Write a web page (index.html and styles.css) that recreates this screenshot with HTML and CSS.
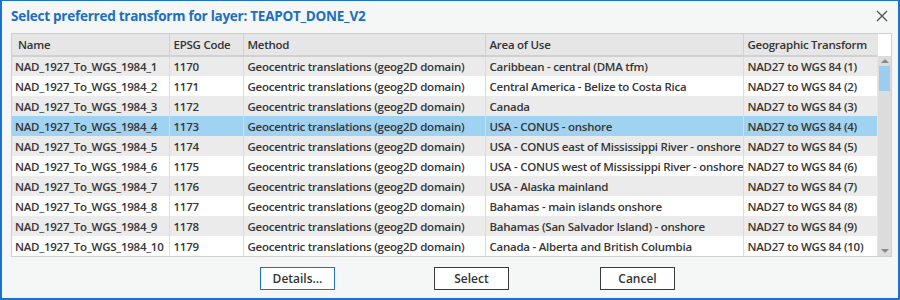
FILE: index.html
```html
<!DOCTYPE html>
<html lang="en">
<head>
    <meta charset="UTF-8">
    <title>Select preferred transform</title>
    <link rel="stylesheet" href="styles.css">
</head>
<body>
    <div class="dialog">
        <div class="titlebar">
            <h1>Select preferred transform for layer: TEAPOT_DONE_V2</h1>
            <svg class="close" width="12" height="12" viewBox="0 0 12 12">
                <path d="M1 1 L11 11 M11 1 L1 11" stroke="#555" stroke-width="1.4" fill="none"/>
            </svg>
        </div>

        <div class="grid">
            <table>
                <colgroup>
                    <col style="width:157px">
                    <col style="width:74px">
                    <col style="width:242px">
                    <col style="width:258px">
                    <col style="width:134px">
                </colgroup>
                <thead>
                    <tr>
                        <th>Name</th>
                        <th>EPSG Code</th>
                        <th>Method</th>
                        <th>Area of Use</th>
                        <th>Geographic Transform</th>
                    </tr>
                </thead>
                <tbody>
                    <tr>
                        <td>NAD_1927_To_WGS_1984_1</td>
                        <td>1170</td>
                        <td>Geocentric translations (geog2D domain)</td>
                        <td>Caribbean - central (DMA tfm)</td>
                        <td>NAD27 to WGS 84 (1)</td>
                    </tr>
                    <tr>
                        <td>NAD_1927_To_WGS_1984_2</td>
                        <td>1171</td>
                        <td>Geocentric translations (geog2D domain)</td>
                        <td>Central America - Belize to Costa Rica</td>
                        <td>NAD27 to WGS 84 (2)</td>
                    </tr>
                    <tr>
                        <td>NAD_1927_To_WGS_1984_3</td>
                        <td>1172</td>
                        <td>Geocentric translations (geog2D domain)</td>
                        <td>Canada</td>
                        <td>NAD27 to WGS 84 (3)</td>
                    </tr>
                    <tr class="selected">
                        <td>NAD_1927_To_WGS_1984_4</td>
                        <td>1173</td>
                        <td>Geocentric translations (geog2D domain)</td>
                        <td>USA - CONUS - onshore</td>
                        <td>NAD27 to WGS 84 (4)</td>
                    </tr>
                    <tr>
                        <td>NAD_1927_To_WGS_1984_5</td>
                        <td>1174</td>
                        <td>Geocentric translations (geog2D domain)</td>
                        <td>USA - CONUS east of Mississippi River - onshore</td>
                        <td>NAD27 to WGS 84 (5)</td>
                    </tr>
                    <tr>
                        <td>NAD_1927_To_WGS_1984_6</td>
                        <td>1175</td>
                        <td>Geocentric translations (geog2D domain)</td>
                        <td>USA - CONUS west of Mississippi River - onshore</td>
                        <td>NAD27 to WGS 84 (6)</td>
                    </tr>
                    <tr>
                        <td>NAD_1927_To_WGS_1984_7</td>
                        <td>1176</td>
                        <td>Geocentric translations (geog2D domain)</td>
                        <td>USA - Alaska mainland</td>
                        <td>NAD27 to WGS 84 (7)</td>
                    </tr>
                    <tr>
                        <td>NAD_1927_To_WGS_1984_8</td>
                        <td>1177</td>
                        <td>Geocentric translations (geog2D domain)</td>
                        <td>Bahamas - main islands onshore</td>
                        <td>NAD27 to WGS 84 (8)</td>
                    </tr>
                    <tr>
                        <td>NAD_1927_To_WGS_1984_9</td>
                        <td>1178</td>
                        <td>Geocentric translations (geog2D domain)</td>
                        <td>Bahamas (San Salvador Island) - onshore</td>
                        <td>NAD27 to WGS 84 (9)</td>
                    </tr>
                    <tr>
                        <td>NAD_1927_To_WGS_1984_10</td>
                        <td>1179</td>
                        <td>Geocentric translations (geog2D domain)</td>
                        <td>Canada - Alberta and British Columbia</td>
                        <td>NAD27 to WGS 84 (10)</td>
                    </tr>
                </tbody>
            </table>
            <div class="scrollbar">
                <div class="scroll-head"></div>
                <div class="track">
                    <svg width="14" height="10" viewBox="0 0 14 10"><path d="M3 7 L7 3 L11 7 Z" fill="#888"/></svg>
                    <div class="thumb"></div>
                    <div class="rest"></div>
                    <svg width="14" height="10" viewBox="0 0 14 10"><path d="M3 3 L11 3 L7 7 Z" fill="#888"/></svg>
                </div>
            </div>
        </div>

        <div class="buttons">
            <button class="focused">Details...</button>
            <button>Select</button>
            <button>Cancel</button>
        </div>
    </div>
</body>
</html>
```

FILE: styles.css
```css
* {
    margin: 0;
    padding: 0;
    box-sizing: border-box;
    font-family: "Open Sans", "Noto Sans", sans-serif;
}

body {
    width: 900px;
    height: 300px;
    overflow: hidden;
}

.dialog {
    width: 900px;
    height: 300px;
    background-color: #f5f6f6;
    border: 2px solid #1a73c8;
    border-top-width: 1px;
    padding: 0 8px 0 9px;
}

.titlebar {
    height: 32px;
    display: flex;
    align-items: center;
    justify-content: space-between;
    padding-bottom: 3px;
}

h1 {
    font-size: 13.5px;
    font-weight: 700;
    color: #1b6fc0;
    letter-spacing: -0.25px;
}

.close {
    margin-right: 2px;
}

.grid {
    display: flex;
    width: 881px;
    border: 1px solid #cfcfcf;
    background-color: white;
}

table {
    width: 865px;
    border-collapse: collapse;
    table-layout: fixed;
}

th, td {
    font-size: 11.5px;
    font-weight: 600;
    color: #353535;
    text-align: left;
    white-space: nowrap;
    overflow: hidden;
    padding: 0 4px;
    letter-spacing: -0.25px;
}

th {
    height: 22px;
    background-color: #e6e6e6;
    border-left: 1px solid #d2d2d2;
    border-bottom: 2px solid #d0d0d0;
    color: #333;
}

th:first-child {
    border-left: none;
    padding-left: 6px;
}

td:first-child {
    border-left: none;
    padding-left: 3px;
}

td {
    height: 20px;
    border-left: 1px solid #dcdcdc;
}

tbody tr:nth-child(odd) {
    background-color: #ebebeb;
}

tbody tr.selected {
    background-color: #a0d2f2;
}

.scrollbar {
    width: 14px;
    display: flex;
    flex-direction: column;
    border-left: 1px solid #e4e4e4;
}

.scroll-head {
    height: 22px;
}

.track {
    flex: 1;
    display: flex;
    flex-direction: column;
    background-color: #dcdcdc;
}

.thumb {
    height: 25px;
    background-color: #9cccee;
    margin: 0 1px;
}

.rest {
    flex: 1;
}

.buttons {
    display: flex;
    padding: 10px 0 0 249px;
}

button {
    width: 75px;
    height: 23px;
    background-color: white;
    border: 1px solid #3a3a3a;
    font-size: 12px;
    font-weight: 600;
    color: #333;
    margin-right: 99px;
}

button:nth-child(2) {
    margin-right: 91px;
}

button.focused {
    border-color: #1a73c8;
}
```
